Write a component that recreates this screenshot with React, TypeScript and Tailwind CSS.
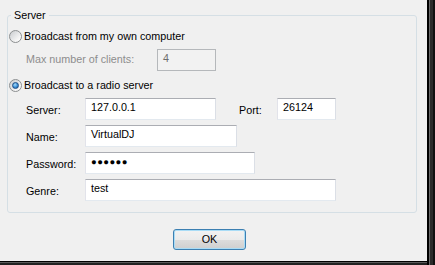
import React from "react";

function Radio({ checked }: { checked?: boolean }) {
  return (
    <span className="flex h-[13px] w-[13px] shrink-0 items-center justify-center rounded-full border border-[#8c8f90] bg-[linear-gradient(135deg,#c9cccf,#f4f4f4_70%,#ffffff)]">
      {checked && (
        <span className="h-[7px] w-[7px] rounded-full border border-[#1f4f86] bg-[radial-gradient(circle_at_40%_35%,#a9dcfa,#3a8fd6_55%,#1a5294)]" />
      )}
    </span>
  );
}

const boxCls =
  "h-[22px] border border-[#abadb3] border-l-[#e2e3ea] border-r-[#dbdfe6] border-b-[#e3e9ef] bg-white pl-[5px] pt-[2px]";

function Row({ label, children, labelTop = "pt-[6px]" }: { label: string; children: React.ReactNode; labelTop?: string }) {
  return (
    <div className="flex items-start pl-[18px]">
      <span className={`w-[59px] ${labelTop}`}>{label}</span>
      {children}
    </div>
  );
}

export default function App() {
  return (
    <div className="flex h-[265px] w-[435px] bg-[#f0f0f0] font-['Liberation_Sans',Arial,sans-serif] text-[10.75px] leading-[13px] text-black">
      <div className="flex w-[427px] flex-col">
        <div className="flex-1 pl-[7px] pt-[9px]">
          <fieldset className="w-[410px] rounded-[3px] border border-[#d5dfe5] pb-[11px]">
            <legend className="ml-[3px] px-[3px]">Server</legend>

            {/* local broadcast */}
            <label className="mt-[7px] flex h-[14px] items-center gap-[2px] pl-[1px]">
              <Radio />
              <span>Broadcast from my own computer</span>
            </label>
            <div className="mt-[6px] flex items-start pl-[18px]">
              <span className="w-[131px] pt-[4px] text-[#8d8d8d]">Max number of clients:</span>
              <div className="h-[22px] w-[59px] border border-[#b5b8bb] bg-[#f2f2f2] pl-[5px] pt-[2px] text-[#6d6d6d]">4</div>
            </div>

            {/* radio server */}
            <label className="mt-[7px] flex h-[14px] items-center gap-[2px] pl-[1px]">
              <Radio checked />
              <span>Broadcast to a radio server</span>
            </label>
            <div className="mt-[6px] flex flex-col gap-[5px]">
              <Row label="Server:">
                <div className={`${boxCls} w-[131px]`}>127.0.0.1</div>
                <span className="ml-[23px] w-[38px] pt-[6px]">Port:</span>
                <div className={`${boxCls} w-[59px]`}>26124</div>
              </Row>
              <Row label="Name:">
                <div className={`${boxCls} w-[152px]`}>VirtualDJ</div>
              </Row>
              <Row label="Password:">
                <div className={`${boxCls} w-[170px] pl-[4px] text-[9.5px] tracking-[0.4px]`}>●●●●●●</div>
              </Row>
              <Row label="Genre:">
                <div className={`${boxCls} w-[251px]`}>test</div>
              </Row>
            </div>
          </fieldset>

          <button className="ml-[166px] mt-[16px] h-[21px] w-[73px] rounded-[3px] border border-[#3c7fb1] bg-[linear-gradient(to_bottom,#f2f2f2_0%,#ebebeb_50%,#dddddd_50%,#cfcfcf_100%)] text-center text-black shadow-[inset_0_0_0_1px_#a9dcf6]">
            OK
          </button>
        </div>
        <div className="h-[4px] bg-[linear-gradient(to_bottom,#000_0,#000_1px,#5a5a5a_1px,#5a5a5a_2px,#222_2px)]" />
      </div>
      <div className="w-[8px] bg-[linear-gradient(to_right,#000_0,#000_2px,#6a6a6a_2px,#6a6a6a_3px,#2b2b2b_3px,#2b2b2b_6px,#111_6px)]" />
    </div>
  );
}
